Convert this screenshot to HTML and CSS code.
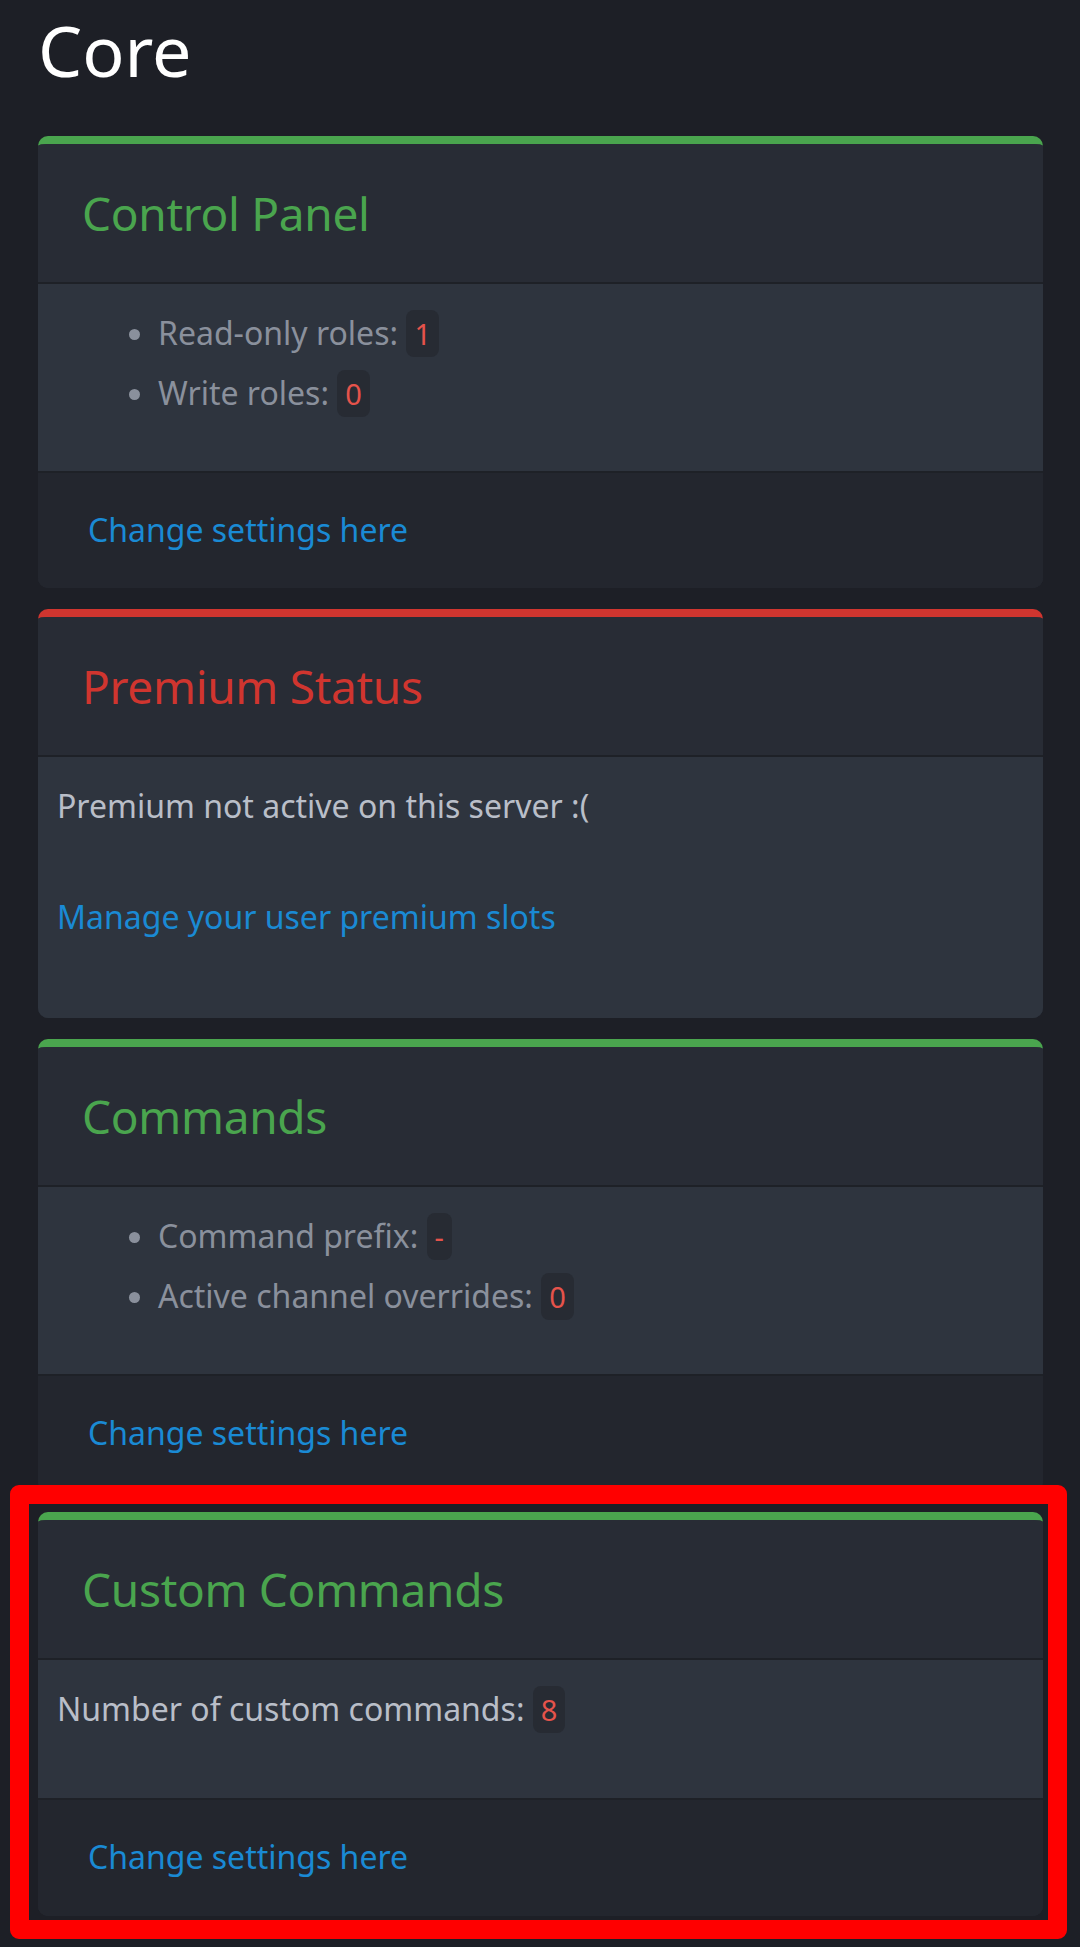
FILE: index.html
```html
<!DOCTYPE html>
<html lang="en">
<head>
<meta charset="utf-8">
<title>Core</title>
<link rel="stylesheet" href="styles.css">
</head>
<body>
<div class="page">
  <h1 class="page-title">Core</h1>

  <section class="card card-green">
    <div class="card-header"><h2 class="card-title">Control Panel</h2></div>
    <div class="card-body">
      <ul class="stats">
        <li>Read-only roles: <code class="badge">1</code></li>
        <li>Write roles: <code class="badge">0</code></li>
      </ul>
    </div>
    <div class="card-footer"><a class="link" href="#">Change settings here</a></div>
  </section>

  <section class="card card-red">
    <div class="card-header"><h2 class="card-title">Premium Status</h2></div>
    <div class="card-body card-body-plain">
      <p class="text">Premium not active on this server :(</p>
      <p class="text text-last"><a class="link" href="#">Manage your user premium slots</a></p>
    </div>
  </section>

  <section class="card card-green">
    <div class="card-header"><h2 class="card-title">Commands</h2></div>
    <div class="card-body">
      <ul class="stats">
        <li>Command prefix: <code class="badge">-</code></li>
        <li>Active channel overrides: <code class="badge">0</code></li>
      </ul>
    </div>
    <div class="card-footer"><a class="link" href="#">Change settings here</a></div>
  </section>

  <section class="card card-green">
    <div class="card-header"><h2 class="card-title">Custom Commands</h2></div>
    <div class="card-body card-body-plain">
      <p class="text text-cc">Number of custom commands: <code class="badge">8</code></p>
    </div>
    <div class="card-footer card-footer-last"><a class="link" href="#">Change settings here</a></div>
  </section>

  <div class="highlight"></div>
</div>
</body>
</html>
```

FILE: styles.css
```css
html, body {
  margin: 0;
  padding: 0;
  background: #1d1f26;
}

body {
  font-family: "Noto Sans", "Open Sans", "Liberation Sans", sans-serif;
  color: #b9bec8;
  width: 1080px;
  height: 1947px;
  overflow: hidden;
}

.page {
  position: relative;
  padding: 8px 37px 0 38px;
}

.page-title {
  margin: 0 0 44px 0;
  font-size: 70px;
  line-height: 84px;
  font-weight: 400;
  color: #ffffff;
}

.card {
  border-radius: 10px;
  overflow: hidden;
  margin-bottom: 21px;
  background: #282c35;
  border-top: 8px solid #4aa54e;
}

.card-red {
  border-top-color: #d0352f;
}

.card-header {
  padding: 42px 42px 41px 44px;
  background: #282c35;
  border-bottom: 2px solid #1e2127;
}

.card-title {
  margin: 0;
  font-size: 46px;
  line-height: 55px;
  font-weight: 400;
  letter-spacing: -0.3px;
  color: #4aa54e;
}

.card-red .card-title {
  color: #d0352f;
}

.card-body {
  background: #2e343e;
  padding: 19px 18px 20px 19px;
  font-size: 32px;
  line-height: 59px;
  border-bottom: 2px solid #1e2127;
}

.card-body-plain {
  border-bottom: none;
}

.card-green .card-body-plain {
  border-bottom: 2px solid #1e2127;
}

.stats {
  margin: 0 0 28px 0;
  padding: 0 0 0 101px;
  color: #8a909c;
}

.stats li::marker {
  color: #8a909c;
}

.text {
  margin: 0 0 52px 0;
  color: #b9bec8;
}

.text-last {
  margin-bottom: 52px;
}

.text-cc {
  margin-bottom: 39px;
}

.badge {
  font-family: "Noto Sans", "Open Sans", sans-serif;
  font-size: 29px;
  color: #e5534b;
  background: #272b33;
  border-radius: 8px;
  padding: 4px 8px;
}

.link {
  color: #1a8ad4;
  text-decoration: none;
}

.card-footer {
  background: #23262e;
  padding: 27px 30px 29px 50px;
  font-size: 32px;
  line-height: 59px;
}

.card-footer-last {
  padding-bottom: 30px;
}

.highlight {
  position: absolute;
  left: 10px;
  top: 1485px;
  width: 1019px;
  height: 416px;
  border: 19px solid #ff0000;
  border-radius: 9px;
}
```
